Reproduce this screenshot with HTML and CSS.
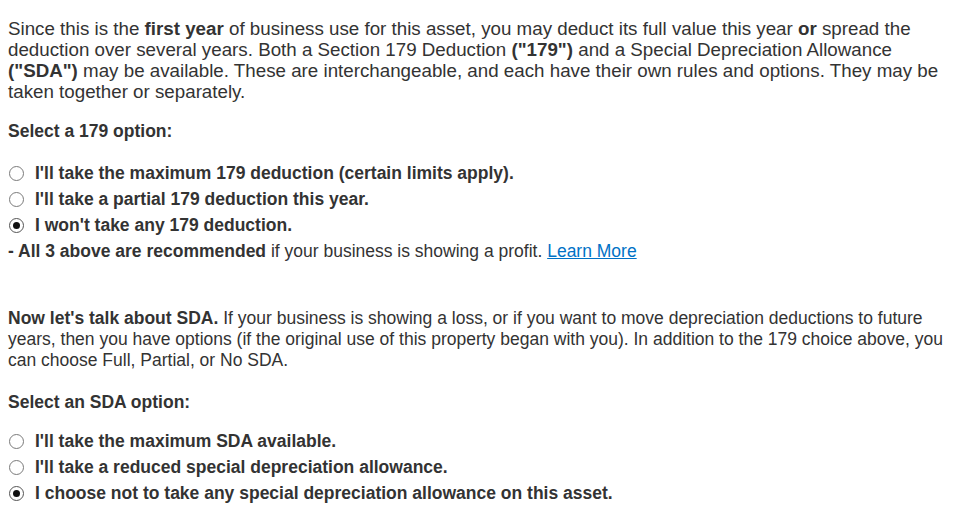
FILE: index.html
```html
<!DOCTYPE html>
<html lang="en">
<head>
    <meta charset="UTF-8">
    <title>Depreciation options</title>
    <link rel="stylesheet" href="styles.css">
</head>
<body>
    <div class="page">
        <p class="text intro">Since this is the <b>first year</b> of business use for this asset, you may deduct its full value this year <b>or</b> spread the deduction over several years. Both a Section 179 Deduction <b>("179")</b> and a Special Depreciation Allowance <b>("SDA")</b> may be available. These are interchangeable, and each have their own rules and options. They may be taken together or separately.</p>

        <div class="label">Select a 179 option:</div>

        <div class="options">
            <label class="option"><input type="radio" name="opt179"> I'll take the maximum 179 deduction (certain limits apply).</label>
            <label class="option"><input type="radio" name="opt179"> I'll take a partial 179 deduction this year.</label>
            <label class="option"><input type="radio" name="opt179" checked> I won't take any 179 deduction.</label>
        </div>
        <div class="note"><b>- All 3 above are recommended</b> if your business is showing a profit. <a href="#">Learn More</a></div>

        <p class="text sda"><b>Now let's talk about SDA.</b> If your business is showing a loss, or if you want to move depreciation deductions to future years, then you have options (if the original use of this property began with you). In addition to the 179 choice above, you can choose Full, Partial, or No SDA.</p>

        <div class="label sda-label">Select an SDA option:</div>

        <div class="options sda-options">
            <label class="option"><input type="radio" name="optsda"> I'll take the maximum SDA available.</label>
            <label class="option"><input type="radio" name="optsda"> I'll take a reduced special depreciation allowance.</label>
            <label class="option"><input type="radio" name="optsda" checked> I choose not to take any special depreciation allowance on this asset.</label>
        </div>
    </div>
</body>
</html>
```

FILE: styles.css
```css
body {
    font-family: "Liberation Sans", Arial, sans-serif;
    font-size: 17.5px;
    color: #333;
    background: white;
    margin: 0;
    padding: 8px;
}

.page {
    max-width: 948px;
}

.text {
    line-height: 21px;
    margin: 10px 0 0;
}

.text.intro {
    font-size: 18.75px;
}

.text.sda {
    margin-top: 44px;
}

.label {
    font-weight: bold;
    line-height: 21px;
    margin-top: 19px;
}

.sda-label {
    margin-top: 21px;
}

.options {
    display: flex;
    flex-direction: column;
    margin-top: 18px;
}

.sda-options {
    margin-top: 15px;
}

.option {
    display: flex;
    align-items: center;
    gap: 11px;
    height: 26px;
    font-weight: bold;
    padding-left: 1px;
}

.option input {
    appearance: none;
    margin: 0;
    width: 15px;
    height: 15px;
    border: 1px solid #7a7a7a;
    border-radius: 50%;
    background: white;
    display: grid;
    place-items: center;
}

.option input:checked {
    border-color: #555;
}

.option input:checked::after {
    content: "";
    width: 7px;
    height: 7px;
    border-radius: 50%;
    background: #111;
}

.note {
    line-height: 26px;
}

.note a {
    color: #0072c6;
}
```
